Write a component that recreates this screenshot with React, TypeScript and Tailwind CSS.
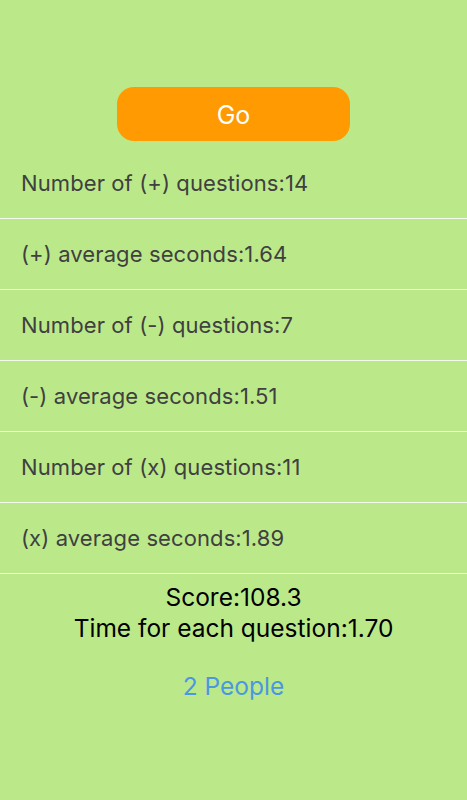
const rows = [
  "Number of (+) questions:14",
  "(+) average seconds:1.64",
  "Number of (-) questions:7",
  "(-) average seconds:1.51",
  "Number of (x) questions:11",
  "(x) average seconds:1.89",
];

export default function App() {
  return (
    <div
      className="min-h-[800px] w-full bg-[#bbe98a] pt-[87px]"
      style={{ fontFamily: "Inter, 'Noto Sans', sans-serif" }}
    >
      <div className="flex justify-center">
        <button className="h-[54px] w-[233px] rounded-[17px] bg-[#ff9a02] pt-[3px] text-[25px] text-white">
          Go
        </button>
      </div>
      <div className="mt-[7px]">
        {rows.map((r) => (
          <div
            key={r}
            className="flex h-[71px] items-center border-b border-[#f4f9ee] pl-[21px] text-[22px] tracking-[0.1px] text-[#404040]"
          >
            {r}
          </div>
        ))}
      </div>
      <div className="mt-[8px] flex flex-col items-center text-[24.5px] leading-[31px] text-black">
        <div>Score:108.3</div>
        <div>Time for each question:1.70</div>
        <div className="mt-[27px] text-[#4b97e0]">2 People</div>
      </div>
    </div>
  );
}
